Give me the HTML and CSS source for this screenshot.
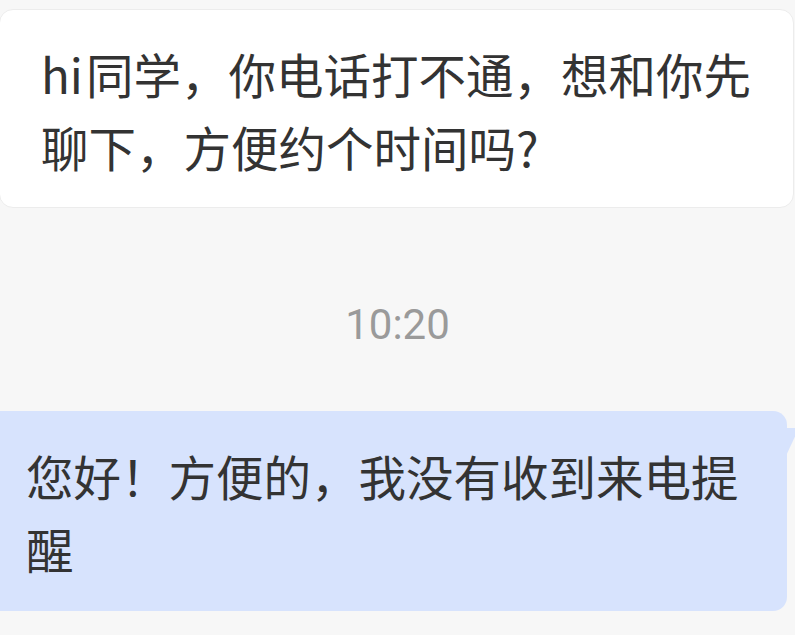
FILE: index.html
```html
<!DOCTYPE html>
<html lang="zh-CN">
<head>
    <meta charset="UTF-8">
    <meta name="viewport" content="width=device-width, initial-scale=1.0">
    <title>聊天</title>
    <link rel="stylesheet" href="styles.css">
</head>
<body>
    <div class="chat">
        <div class="msg msg-left"><span class="hi">hi</span>同学，你电话打不通，想和你先聊下，方便约个时间吗?</div>
        <div class="time">10:20</div>
        <div class="msg msg-right">您好！方便的，我没有收到来电提醒</div>
    </div>
</body>
</html>
```

FILE: styles.css
```css
* {
    padding: 0;
    margin: 0;
    box-sizing: border-box;
}

body {
    background: #f7f7f7;
    font-family: "Noto Sans CJK SC", "Noto Sans", sans-serif;
    color: #333;
    overflow: hidden;
}

.chat {
    display: flex;
    flex-direction: column;
    padding-top: 9px;
}

.msg {
    font-size: 47.5px;
    line-height: 73px;
    border-radius: 14px;
}

.msg-left {
    margin: 0 1px 0 -1px;
    padding: 27px 20px 24px 41px;
    background: #fff;
    border: 1px solid #ececec;
}

.msg-left .hi {
    margin-right: 3px;
}

.time {
    margin-top: 92px;
    text-align: center;
    font-family: Roboto, "Noto Sans", sans-serif;
    font-size: 42px;
    line-height: 50px;
    color: #9a9a9a;
}

.msg-right {
    position: relative;
    margin: 61px 8px 0 -14px;
    padding: 28px 20px 26px 40px;
    background: #d7e3fd;
}

/* little tail at the top right of the bubble */
.msg-right::after {
    content: "";
    position: absolute;
    top: 17px;
    right: -12px;
    border-left: 14px solid #d7e3fd;
    border-bottom: 30px solid transparent;
}
```
